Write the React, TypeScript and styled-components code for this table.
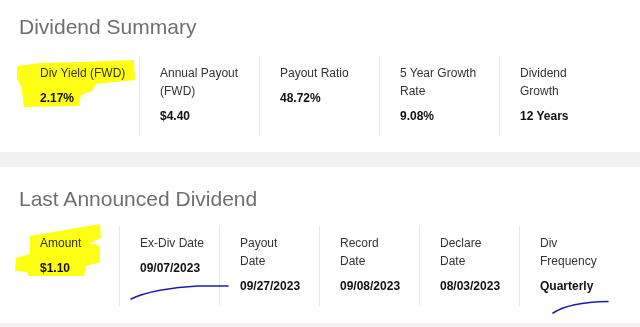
import React from "react";
import styled, { createGlobalStyle } from "styled-components";

const GlobalStyle = createGlobalStyle`
  html, body { margin: 0; padding: 0; background: #f2f0f0; }
  body { font-family: "Liberation Sans", Arial, sans-serif; }
`;

const Page = styled.div`
  position: relative;
  width: 640px;
  height: 327px;
  overflow: hidden;
  background: #f2f0f0;
  display: flex;
  flex-direction: column;
  gap: 15px;
`;

const Section = styled.section<{ $top: number; $height: number }>`
  background: #ffffff;
  height: ${(p) => p.$height}px;
  box-sizing: border-box;
  padding: ${(p) => p.$top}px 0 0 19px;
  display: flex;
  flex-direction: column;
`;

const Title = styled.h2<{ $gap: number }>`
  margin: 0 0 ${(p) => p.$gap}px 0;
  font-size: 21px;
  line-height: 24px;
  font-weight: 400;
  color: #6f6f6f;
`;

const Row = styled.div`
  display: flex;
`;

const Cell = styled.div<{ $width: number; $first?: boolean }>`
  width: ${(p) => p.$width}px;
  height: 80px;
  box-sizing: border-box;
  padding: 8px 0 0 ${(p) => (p.$first ? 21 : 20)}px;
  border-left: ${(p) => (p.$first ? "none" : "1px solid #e8e8e8")};
  display: flex;
  flex-direction: column;
`;

const Label = styled.div`
  font-size: 12px;
  line-height: 18px;
  color: #333333;
`;

const Value = styled.div`
  margin-top: 7px;
  font-size: 12px;
  line-height: 18px;
  font-weight: 700;
  color: #111111;
`;

const Marks = styled.svg`
  position: absolute;
  left: 0;
  top: 0;
  width: 640px;
  height: 327px;
  pointer-events: none;
  mix-blend-mode: multiply;
`;

type Item = { label: React.ReactNode; value: string };

const summary: Item[] = [
  { label: "Div Yield (FWD)", value: "2.17%" },
  { label: <>Annual Payout<br />(FWD)</>, value: "$4.40" },
  { label: "Payout Ratio", value: "48.72%" },
  { label: <>5 Year Growth<br />Rate</>, value: "9.08%" },
  { label: <>Dividend<br />Growth</>, value: "12 Years" },
];

const announced: Item[] = [
  { label: "Amount", value: "$1.10" },
  { label: "Ex-Div Date", value: "09/07/2023" },
  { label: <>Payout<br />Date</>, value: "09/27/2023" },
  { label: <>Record<br />Date</>, value: "09/08/2023" },
  { label: <>Declare<br />Date</>, value: "08/03/2023" },
  { label: <>Div<br />Frequency</>, value: "Quarterly" },
];

const Metrics = ({ items, width }: { items: Item[]; width: number }) => (
  <Row>
    {items.map((it, i) => (
      <Cell key={i} $width={width} $first={i === 0}>
        <Label>{it.label}</Label>
        <Value>{it.value}</Value>
      </Cell>
    ))}
  </Row>
);

export default function App() {
  return (
    <>
      <GlobalStyle />
      <Page>
        <Section $top={15} $height={152}>
          <Title $gap={17}>Dividend Summary</Title>
          <Metrics items={summary} width={120} />
        </Section>
        <Section $top={20} $height={156}>
          <Title $gap={15}>Last Announced Dividend</Title>
          <Metrics items={announced} width={100} />
        </Section>
        <Marks viewBox="0 0 640 327">
          <path
            d="M17,66 L40,63 L80,62 L134,60 L135,80 L96,84 L92,91 L81,95 L79,106 L24,107 L21,86 L17,79 Z"
            fill="#ffff14"
          />
          <path
            d="M30,236 L100,224 L101,238 L90,243 L100,246 L100,262 L86,266 L84,276 L28,276 L27,272 L15,271 L16,258 L30,254 Z"
            fill="#ffff14"
          />
          <path
            d="M131,299 C145,292 172,287 198,286 L228,286"
            fill="none"
            stroke="#1c1cb0"
            strokeWidth="1.6"
            strokeLinecap="round"
          />
          <path
            d="M553,313 C565,305 585,302 608,301.5"
            fill="none"
            stroke="#1c1cb0"
            strokeWidth="1.6"
            strokeLinecap="round"
          />
        </Marks>
      </Page>
    </>
  );
}
